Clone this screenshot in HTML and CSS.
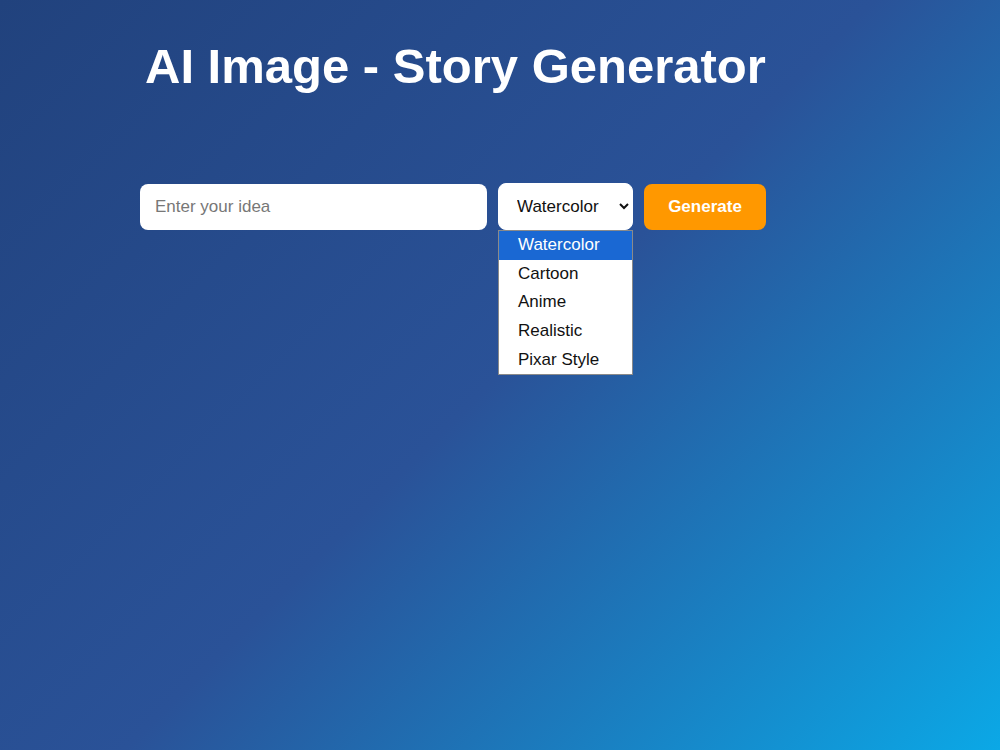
FILE: index.html
```html
<!DOCTYPE html>
<html lang="en">
<head>
    <meta charset="UTF-8">
    <meta name="viewport" content="width=device-width, initial-scale=1.0">
    <title>AI Image - Story Generator</title>
    <link rel="stylesheet" href="styles.css">
</head>
<body>
    <div class="app">
        <h1>AI Image - Story Generator</h1>

        <div class="controls">
            <input type="text" id="prompt" class="prompt-input" placeholder="Enter your idea">

            <div class="style-picker">
                <select id="style" class="style-select">
                    <option>Watercolor</option>
                    <option>Cartoon</option>
                    <option>Anime</option>
                    <option>Realistic</option>
                    <option>Pixar Style</option>
                </select>
                <!-- open list of styles -->
                <ul class="style-list">
                    <li class="active">Watercolor</li>
                    <li>Cartoon</li>
                    <li>Anime</li>
                    <li>Realistic</li>
                    <li>Pixar Style</li>
                </ul>
            </div>

            <button id="generate" class="generate-btn">Generate</button>
        </div>
    </div>
</body>
</html>
```

FILE: styles.css
```css
/* --- Page --- */
html, body {
    margin: 0;
    height: 100%;
}

body {
    background: linear-gradient(135deg, #21427d 0%, #2a5298 50%, #0ba8e6 100%);
    font-family: 'Liberation Sans', Arial, sans-serif;
    color: #fff;
}

.app {
    padding: 39px 0 0 140px;
}

h1 {
    margin: 0 0 0 5px;
    font-size: 49px;
    font-weight: bold;
    line-height: 55px;
    color: #fff;
}

/* --- Input row --- */
.controls {
    display: flex;
    align-items: center;
    gap: 11px;
    margin-top: 89px;
}

.prompt-input {
    box-sizing: border-box;
    width: 347px;
    height: 46px;
    padding: 0 15px;
    border: none;
    border-radius: 8px;
    background: #fff;
    font-family: inherit;
    font-size: 17px;
    color: #222;
    outline: none;
}

.prompt-input::placeholder {
    color: #777;
}

.style-picker {
    position: relative; /* the open list hangs below the select */
}

.style-select {
    box-sizing: border-box;
    display: block;
    width: 135px;
    height: 47px;
    padding: 0 6px 0 14px;
    border: 1px solid #fff;
    border-radius: 8px;
    background: #fff;
    font-family: inherit;
    font-size: 17px;
    color: #111;
}

.style-list {
    position: absolute;
    top: 100%;
    left: 0;
    box-sizing: border-box;
    width: 135px;
    margin: 0;
    padding: 0;
    list-style: none;
    background: #fff;
    border: 1px solid #8a8a8a;
    z-index: 5;
}

.style-list li {
    height: 28.7px;
    line-height: 28.7px;
    padding-left: 19px;
    font-size: 17px;
    color: #111;
}

.style-list li.active {
    background: #1a68d3;
    color: #fff;
}

.generate-btn {
    width: 122px;
    height: 46px;
    border: none;
    border-radius: 8px;
    background: #ff9800;
    font-family: inherit;
    font-size: 17px;
    font-weight: bold;
    color: #fff;
    cursor: pointer;
}
```
